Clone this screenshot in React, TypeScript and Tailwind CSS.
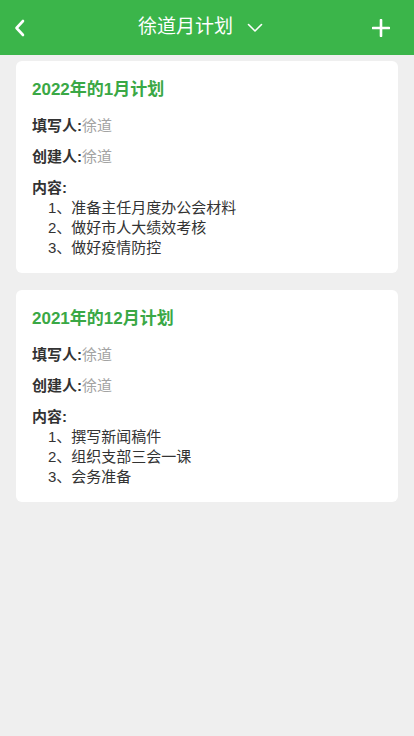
import React from "react";

type Plan = {
    title: string;
    writer: string;
    creator: string;
    items: string[];
};

const plans: Plan[] = [
    {
        title: "2022年的1月计划",
        writer: "徐道",
        creator: "徐道",
        items: ["准备主任月度办公会材料", "做好市人大绩效考核", "做好疫情防控"],
    },
    {
        title: "2021年的12月计划",
        writer: "徐道",
        creator: "徐道",
        items: ["撰写新闻稿件", "组织支部三会一课", "会务准备"],
    },
];

function PlanCard({ plan }: { plan: Plan }) {
    return (
        <div className="bg-white rounded-[6px] px-4 pt-[17px] pb-[15px]">
            <h2 className="text-[17px] leading-[24px] font-bold text-[#3aa845]">{plan.title}</h2>
            <div className="mt-[14px] text-[15px] leading-[20px]">
                <span className="font-bold text-[#333]">填写人:</span>
                <span className="text-[#a3a3a3]">{plan.writer}</span>
            </div>
            <div className="mt-[11px] text-[15px] leading-[20px]">
                <span className="font-bold text-[#333]">创建人:</span>
                <span className="text-[#a3a3a3]">{plan.creator}</span>
            </div>
            <div className="mt-[11px] text-[15px] leading-[20px] font-bold text-[#333]">内容:</div>
            <ul className="pl-4 text-[15px] leading-[20px] text-[#333]">
                {plan.items.map((item, i) => (
                    <li key={i}>
                        {i + 1}、{item}
                    </li>
                ))}
            </ul>
        </div>
    );
}

export default function App() {
    return (
        <div
            className="min-h-[736px] bg-[#efefef]"
            style={{ fontFamily: '"Liberation Sans", "Noto Sans CJK SC", sans-serif' }}
        >
            <header className="h-[55px] bg-[#3bb54a] flex items-center pl-1 pr-[17px] text-white">
                <button className="w-8 h-8 flex items-center justify-center">
                    <svg width="14" height="20" viewBox="0 0 14 20" fill="none">
                        <path d="M10 3L3.5 10L10 17" stroke="white" strokeWidth="2.6" strokeLinecap="round" strokeLinejoin="round" />
                    </svg>
                </button>
                <div className="flex-1 flex items-center justify-center gap-[14px]">
                    <span className="text-[19px]">徐道月计划</span>
                    <svg width="16" height="10" viewBox="0 0 16 10" fill="none">
                        <path d="M1.5 1.5L8 8L14.5 1.5" stroke="white" strokeWidth="1.6" strokeLinecap="round" strokeLinejoin="round" />
                    </svg>
                </div>
                <button className="w-8 h-8 flex items-center justify-center">
                    <svg width="18" height="18" viewBox="0 0 18 18" fill="none">
                        <path d="M9 1V17M1 9H17" stroke="white" strokeWidth="2.6" strokeLinecap="round" />
                    </svg>
                </button>
            </header>
            <main className="px-4 pt-[6px] flex flex-col gap-[17px]">
                {plans.map((p) => (
                    <PlanCard key={p.title} plan={p} />
                ))}
            </main>
        </div>
    );
}
